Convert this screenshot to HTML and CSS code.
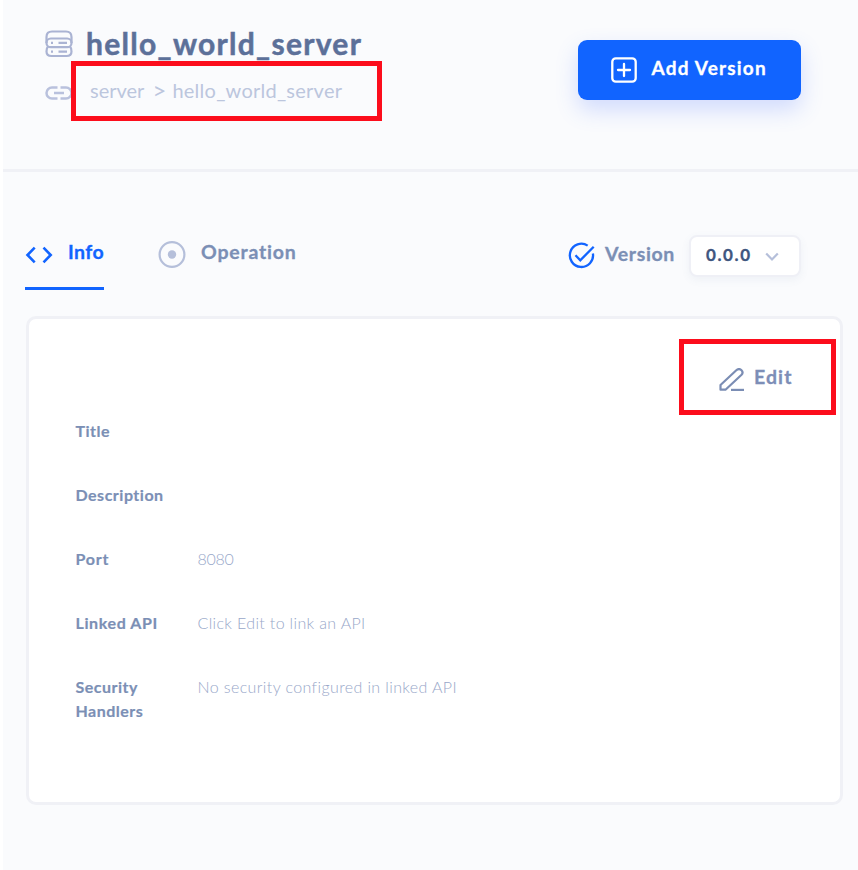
FILE: index.html
```html
<!DOCTYPE html>
<html lang="en">
<head>
<meta charset="utf-8">
<title>hello_world_server</title>
<link rel="stylesheet" href="styles.css">
</head>
<body>
<main class="page">
  <header class="header">
    <div class="heading">
      <div class="title-row">
        <svg class="icon-server" width="28" height="28" viewBox="0 0 28 28" fill="none" stroke="#aab3d3" stroke-width="2.200"><path d="M1.500 13V7Q1.500 1.500 7 1.500H21Q26.500 1.500 26.500 7V13"/><rect x="1.500" y="8.500" width="25" height="8.700" rx="4.300"/><path d="M3 16.500Q1.500 18 1.500 21.500Q1.500 26 6.500 26H21.500Q26.500 26 26.500 21.500Q26.500 18 25 16.500"/><path d="M13.500 12.900H22M13.500 21.600H22M6 12.900H8M6 21.600H8"/></svg>
        <h1 class="title"><span class="t-title">hello_world_server</span></h1>
      </div>
      <div class="crumb-row">
        <svg class="icon-link" width="28" height="16" viewBox="0 0 28 16" fill="none" stroke="#b9c1dd" stroke-width="2.500"><path d="M12.500 2.500H7a5.500 5.500 0 0 0 0 11H12.500M15.500 2.500H21a5.500 5.500 0 0 1 0 11H15.500M9 8H19"/></svg>
        <nav class="crumbs"><span class="t-server">server</span><span class="t-gt">&gt;</span><span class="t-name">hello_world_server</span></nav>
      </div>
    </div>
    <button class="add">
      <svg width="26" height="26" viewBox="0 0 26 26" fill="none" stroke="#fff" stroke-width="2.300" stroke-linecap="round"><rect x="1.300" y="1.300" width="23.400" height="23.400" rx="3.500"/><path d="M13 7V19M7 13H19"/></svg>
      <span class="t-add">Add Version</span>
    </button>
  </header>
  <section class="toolbar">
    <div class="tab active">
      <svg class="icon-code" width="28" height="18" viewBox="0 0 28 18" fill="none" stroke="#1164ff" stroke-width="2.600"><path d="M9.700 1.700L2.500 9L9.700 16.300M18.500 1.700L25.700 9L18.500 16.300"/></svg>
      <span class="t-info">Info</span>
    </div>
    <div class="tab">
      <svg class="icon-target" width="28" height="28" viewBox="0 0 28 28"><circle cx="14" cy="14.500" r="12.400" fill="none" stroke="#b5bfda" stroke-width="2.200"/><circle cx="14" cy="14.500" r="4.200" fill="#b5bfda"/></svg>
      <span class="t-op">Operation</span>
    </div>
    <div class="version">
      <svg class="icon-check" width="28" height="28" viewBox="0 0 28 28" fill="none" stroke="#1164ff" stroke-width="2.300"><path d="M19.700 3.600A11.600 11.600 0 1 0 24.900 11.500"/><path d="M7.500 13.200L12.300 18.300L25.700 4.700"/></svg>
      <span class="t-ver">Version</span>
      <div class="select"><span class="t-num">0.0.0</span>
        <svg width="14" height="10" viewBox="0 0 14 10" fill="none" stroke="#b5bfda" stroke-width="2.200"><path d="M1.200 1.500L7 7.500L12.800 1.500"/></svg>
      </div>
    </div>
  </section>
  <section class="card">
    <div class="edit">
      <svg width="26" height="24" viewBox="0 0 26 24" fill="none" stroke="#7b8db4" stroke-width="2.200"><path d="M1.500 21.700V17L17.300 2.300C19 .8 21 .8 22.500 2.200C24 3.700 23.700 5.500 22.300 7L6.500 21.700Z" stroke-linejoin="round"/><path d="M12 21.900H25"/></svg>
      <span class="t-edit">Edit</span>
    </div>
    <dl class="info">
      <dt><span class="l-title">Title</span></dt><dd></dd>
      <dt><span class="l-desc">Description</span></dt><dd></dd>
      <dt><span class="l-port">Port</span></dt><dd><span class="v-port">8080</span></dd>
      <dt><span class="l-api">Linked API</span></dt><dd><span class="v-api">Click Edit to link an API</span></dd>
      <dt><span class="l-sec">Security<br>Handlers</span></dt><dd><span class="v-sec">No security configured in linked API</span></dd>
    </dl>
  </section>
  <div class="mark mark-crumbs"></div>
  <div class="mark mark-edit"></div>
</main>
</body>
</html>
```
FILE: styles.css
```css
* { box-sizing: border-box; }
body { margin: 0; background: #fff; font-family: Lato, "Liberation Sans", sans-serif; overflow: hidden; }
svg { display: block; flex: none; }
span { white-space: nowrap; }
.page { position: relative; height: 870px; margin-left: 3px; background: #fafbfd; }
.header { display: flex; justify-content: space-between; align-items: flex-start; height: 172px; padding: 25px 57.500px 0 42px; border-bottom: 3px solid #f0f1f6; }
.title-row { display: flex; height: 36px; align-items: center; gap: 13px; }
.icon-server { margin-top: 2px; }
.title { margin: 0; font-size: 30px; line-height: 36px; font-weight: 700; color: #5c7099; letter-spacing: 1.300px; -webkit-text-stroke: .5px #5c7099; }
.crumb-row { display: flex; align-items: center; height: 28px; margin-top: 15px; gap: 17px; }
.icon-link { margin-top: 5px; }
.crumbs { display: flex; font-size: 20px; line-height: 28px; color: #bcc6dd; }
.t-gt { width: 28px; padding-left: 8px; font-size: 24px; line-height: 28px; }
.t-name { letter-spacing: .25px; }
.add { display: flex; width: 223px; height: 60px; margin-top: 14.500px; padding: 0 0 0 33px; align-items: center; gap: 15px; border: 0; border-radius: 9px; background: #1164ff; color: #fff; font: 700 19px/26px Lato, sans-serif; box-shadow: 0 10px 22px rgba(70, 110, 255, .22); }
.add span { margin-top: -4px; letter-spacing: 1.200px; -webkit-text-stroke: .3px; }
.toolbar { display: flex; align-items: flex-start; height: 144px; padding: 63px 57px 0 22px; font-size: 19.500px; line-height: 28px; font-weight: 700; color: #7b8fb5; -webkit-text-stroke: .3px; }
.tab { display: flex; height: 55px; padding-top: 3px; margin-right: 54px; }
.tab svg { margin-right: 15px; }
.active { width: 79px; color: #1164ff; border-bottom: 3px solid #1164ff; }
.icon-code { margin-top: 8px; }
.icon-target { margin-top: 2px; }
.t-info { letter-spacing: .4px; }
.t-op { letter-spacing: .8px; }
.version { display: flex; margin-left: auto; }
.icon-check { margin: 7px 9px 0 0; }
.t-ver { margin-top: 5px; letter-spacing: .65px; }
.select { display: flex; width: 112px; height: 42px; margin-left: 14px; padding-left: 15px; align-items: center; gap: 13px; border: 2px solid #eff0f6; border-radius: 8px; background: #fff; font-size: 17px; color: #40567f; box-shadow: 0 3px 8px rgba(90, 110, 160, .07); }
.t-num { margin-top: -2px; letter-spacing: 1.600px; }
.select svg { margin-top: 2px; }
.card { width: 817px; height: 489px; margin-left: 22.500px; padding: 45px 47px 0; border: 3px solid #f0f1f6; border-radius: 10px; background: #fff; }
.edit { display: flex; justify-content: flex-end; gap: 8.500px; font-size: 19.500px; line-height: 26px; font-weight: 700; color: #7d8eb7; }
.edit svg { margin-top: 4px; }
.t-edit { letter-spacing: 1.100px; -webkit-text-stroke: .3px; }
.info { display: grid; grid-template-columns: 122px 1fr; grid-auto-rows: 64.100px; margin: 27px 0 0; font-size: 16px; line-height: 23.500px; }
.info dt { font-weight: 700; color: #7b8fb5; letter-spacing: .5px; -webkit-text-stroke: .2px; }
.info dd { margin: 0; font-weight: 300; color: #98a7c9; }
.l-port { letter-spacing: .8px; }
.l-api { letter-spacing: .62px; }
.v-port { letter-spacing: -.25px; }
.v-api { letter-spacing: .35px; }
.v-sec { letter-spacing: .39px; }
.mark { position: absolute; border: 5px solid #fc0d1c; }
.mark-crumbs { left: 68px; top: 61px; width: 311px; height: 60px; }
.mark-edit { left: 676px; top: 339px; width: 157px; height: 76px; }
```
